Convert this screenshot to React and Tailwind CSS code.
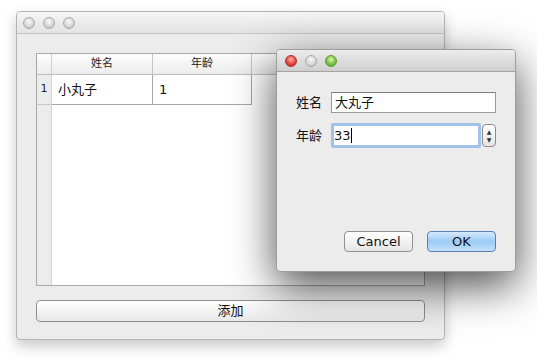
import React from 'react'

const font = { fontFamily: '"DejaVu Sans", "Noto Sans CJK SC", sans-serif' }

const Light = ({ tone }) => {
  const cls = {
    gray: 'bg-[radial-gradient(circle_at_50%_35%,#fafafa,#d4d4d4_60%,#b9b9b9)] border-[#a9a9a9]',
    red: 'bg-[radial-gradient(circle_at_50%_35%,#ffb0a8,#e5463f_55%,#b8211c)] border-[#a8322c]',
    green: 'bg-[radial-gradient(circle_at_50%_35%,#d8f7b0,#78c344_55%,#4c9a22)] border-[#5d9a34]',
  }[tone]
  return <div className={`w-3 h-3 rounded-full border ${cls}`} />
}

const MainWindow = () => (
  <div className="absolute left-[16px] top-[11px] w-[429px] h-[329px] rounded-[4px] border border-[#b4b4b4] bg-[#ececec] shadow-[0_6px_14px_rgba(0,0,0,0.22)] flex flex-col overflow-hidden">
    <div className="h-[22px] shrink-0 flex items-center gap-[8px] pl-[6px] bg-gradient-to-b from-[#f5f5f5] to-[#e3e3e3] border-b border-[#c4c4c4]">
      <Light tone="gray" />
      <Light tone="gray" />
      <Light tone="gray" />
    </div>
    <div className="flex-1 flex flex-col px-[19px] pt-[19px] pb-[18px]">
      <div className="h-[233px] border border-[#a8a8a8] bg-white flex flex-col">
        <div className="h-[21px] flex text-[11px] text-[#222] bg-gradient-to-b from-[#fdfdfd] to-[#ececec] border-b border-[#bdbdbd]">
          <div className="w-[15px] border-r border-[#d0d0d0]" />
          <div className="w-[101px] flex items-center justify-center border-r border-[#c4c4c4]">姓名</div>
          <div className="w-[99px] flex items-center justify-center border-r border-[#c4c4c4]">年龄</div>
          <div className="flex-1" />
        </div>
        <div className="flex-1 flex">
          <div className="w-[15px] bg-[#ececec] border-r border-[#d4d4d4] flex flex-col">
            <div className="h-[30px] flex items-center justify-center text-[11px] text-[#222] border-b border-[#c8c8c8]">1</div>
          </div>
          <div className="flex-1 flex flex-col">
            <div className="h-[30px] flex text-[13px] text-[#111]">
              <div className="w-[101px] flex items-center pl-[6px] border-r border-b border-[#a8a8a8]">小丸子</div>
              <div className="w-[99px] flex items-center pl-[6px] border-r border-b border-[#a8a8a8]">1</div>
            </div>
          </div>
        </div>
      </div>
      <div className="mt-[14px] h-[22px] rounded-[4px] border border-[#8f8f8f] bg-gradient-to-b from-white to-[#e8e8e8] flex items-center justify-center text-[13px] text-[#111]">添加</div>
    </div>
  </div>
)

const Dialog = () => (
  <div className="absolute left-[276px] top-[49px] w-[240px] h-[223px] rounded-[4px] border border-[#9c9c9c] bg-[#ececec] shadow-[0_14px_44px_rgba(0,0,0,0.7)] flex flex-col overflow-hidden">
    <div className="h-[22px] shrink-0 flex items-center gap-[8px] pl-[8px] bg-gradient-to-b from-[#ececec] to-[#cfcfcf] border-b border-[#a4a4a4]">
      <Light tone="red" />
      <Light tone="gray" />
      <Light tone="green" />
    </div>
    <div className="flex-1 flex flex-col pl-[19px] pr-[19px] pt-[20px] text-[13px] text-[#111]">
      <div className="flex items-center gap-[8px]">
        <span className="w-[27px]">姓名</span>
        <div className="w-[165px] h-[21px] border border-[#9a9a9a] border-t-[#7d7d7d] bg-white flex items-center pl-[3px]">大丸子</div>
      </div>
      <div className="flex items-center gap-[8px] mt-[10px]">
        <span className="w-[27px]">年龄</span>
        <div className="flex items-center gap-[1px]">
          <div className="w-[150px] h-[25px] rounded-[2px] border-[3px] border-[#a3c0e8] bg-white flex items-center pl-[0px]">
            33<span className="w-px h-[15px] bg-black" />
          </div>
          <div className="w-[14px] h-[23px] rounded-[4px] border border-[#8c8c8c] bg-gradient-to-b from-white to-[#e4e4e4] flex flex-col items-center justify-center text-[6px] leading-[8px] text-[#333]">
            <span>▲</span>
            <span>▼</span>
          </div>
        </div>
      </div>
      <div className="mt-auto mb-[19px] flex justify-end gap-[14px]">
        <div className="w-[69px] h-[21px] rounded-[4px] border border-[#8f8f8f] bg-gradient-to-b from-white to-[#e6e6e6] flex items-center justify-center text-[13px]">Cancel</div>
        <div className="w-[69px] h-[21px] rounded-[4px] border border-[#5a7fb4] bg-gradient-to-b from-[#d6e9fc] via-[#9ccaf7] to-[#c3e1fb] flex items-center justify-center text-[13px]">OK</div>
      </div>
    </div>
  </div>
)

export default function App() {
  return (
    <div style={font} className="relative w-[537px] h-[359px] bg-white overflow-hidden">
      <MainWindow />
      <Dialog />
    </div>
  )
}
